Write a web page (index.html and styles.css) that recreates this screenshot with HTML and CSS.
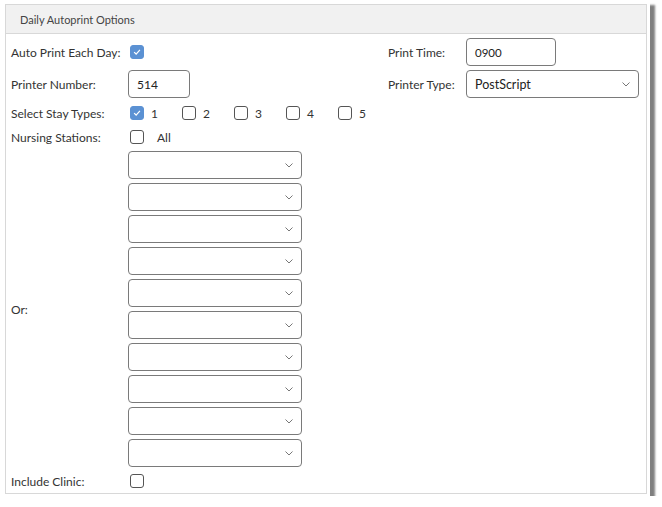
FILE: index.html
```html
<!DOCTYPE html>
<html>
<head>
<meta charset="utf-8">
<link rel="stylesheet" href="styles.css">
</head>
<body>
<div class="frame">
  <div class="panel">
    <div class="panel-head">Daily Autoprint Options</div>
    <div class="panel-body">
      <div class="row row-top">
        <div class="label">Auto Print Each Day:</div>
        <div class="field"><span class="cb checked"><svg viewBox="0 0 14 14"><path d="M3.6 7.2 L6 9.4 L10.4 4.6" /></svg></span></div>
        <div class="label">Print Time:</div>
        <div class="field"><div class="input time">0900</div></div>
      </div>
      <div class="row row-top">
        <div class="label">Printer Number:</div>
        <div class="field"><div class="input num">514</div></div>
        <div class="label">Printer Type:</div>
        <div class="field"><div class="select wide"><span class="val">PostScript</span><svg class="chev" viewBox="0 0 8 5"><path d="M0.5 0.5 L4 4 L7.5 0.5"/></svg></div></div>
      </div>
      <div class="row row-stay">
        <div class="label">Select Stay Types:</div>
        <div class="field checks">
          <label class="opt"><span class="cb checked"><svg viewBox="0 0 14 14"><path d="M3.6 7.2 L6 9.4 L10.4 4.6" /></svg></span><span>1</span></label>
          <label class="opt"><span class="cb"></span><span>2</span></label>
          <label class="opt"><span class="cb"></span><span>3</span></label>
          <label class="opt"><span class="cb"></span><span>4</span></label>
          <label class="opt"><span class="cb"></span><span>5</span></label>
        </div>
      </div>
      <div class="row row-nurse">
        <div class="label">Nursing Stations:</div>
        <div class="field"><label class="opt all"><span class="cb"></span><span>All</span></label></div>
      </div>
      <div class="row row-or">
        <div class="label">Or:</div>
        <div class="field selects">
          <div class="select"><svg class="chev" viewBox="0 0 8 5"><path d="M0.5 0.5 L4 4 L7.5 0.5"/></svg></div>
          <div class="select"><svg class="chev" viewBox="0 0 8 5"><path d="M0.5 0.5 L4 4 L7.5 0.5"/></svg></div>
          <div class="select"><svg class="chev" viewBox="0 0 8 5"><path d="M0.5 0.5 L4 4 L7.5 0.5"/></svg></div>
          <div class="select"><svg class="chev" viewBox="0 0 8 5"><path d="M0.5 0.5 L4 4 L7.5 0.5"/></svg></div>
          <div class="select"><svg class="chev" viewBox="0 0 8 5"><path d="M0.5 0.5 L4 4 L7.5 0.5"/></svg></div>
          <div class="select"><svg class="chev" viewBox="0 0 8 5"><path d="M0.5 0.5 L4 4 L7.5 0.5"/></svg></div>
          <div class="select"><svg class="chev" viewBox="0 0 8 5"><path d="M0.5 0.5 L4 4 L7.5 0.5"/></svg></div>
          <div class="select"><svg class="chev" viewBox="0 0 8 5"><path d="M0.5 0.5 L4 4 L7.5 0.5"/></svg></div>
          <div class="select"><svg class="chev" viewBox="0 0 8 5"><path d="M0.5 0.5 L4 4 L7.5 0.5"/></svg></div>
          <div class="select"><svg class="chev" viewBox="0 0 8 5"><path d="M0.5 0.5 L4 4 L7.5 0.5"/></svg></div>
        </div>
      </div>
      <div class="row row-clinic">
        <div class="label">Include Clinic:</div>
        <div class="field"><span class="cb"></span></div>
      </div>
    </div>
  </div>
</div>
</body>
</html>
```

FILE: styles.css
```css
html, body {
  margin: 0;
  padding: 0;
  background: #ffffff;
}
body {
  font-family: "Lato", "Open Sans", sans-serif;
  font-size: 12px;
  color: #333;
}
.frame {
  width: 650px;
  height: 496px;
  background: #fff;
  box-shadow: 5px 5px 2px rgba(0, 0, 0, 0.5);
  padding: 4px 0 0 5px;
  box-sizing: border-box;
}
.panel {
  width: 642px;
  height: 490px;
  border: 1px solid #d8d8d8;
  box-sizing: border-box;
  display: flex;
  flex-direction: column;
}
.panel-head {
  height: 29px;
  background: #f1f1f1;
  border-bottom: 1px solid #d8d8d8;
  box-sizing: border-box;
  padding-left: 14px;
  display: flex;
  align-items: center;
  font-size: 11px;
  color: #444;
}
.panel-body {
  padding: 4px 5px 0 5px;
}
.row {
  display: grid;
  grid-template-columns: 117px auto;
  align-items: center;
}
.row-top {
  grid-template-columns: 117px 260px 78px auto;
  height: 28px;
  margin-bottom: 4px;
}
.row-stay {
  height: 22px;
  margin-bottom: 2px;
}
.row-nurse {
  height: 22px;
  margin-bottom: 3px;
}
.row-or {
  margin-bottom: 4px;
}
.row-clinic {
  height: 20px;
}
.field {
  display: flex;
  align-items: center;
}
.cb {
  width: 14px;
  height: 14px;
  box-sizing: border-box;
  border: 1px solid #555;
  border-radius: 3px;
  background: #fff;
  margin-left: 2px;
  display: inline-flex;
  flex: none;
}
.cb.checked {
  background: #5b91d3;
  border-color: #5b91d3;
}
.cb svg {
  width: 12px;
  height: 12px;
  fill: none;
  stroke: #fff;
  stroke-width: 1.4;
}
.checks {
  display: flex;
  gap: 0;
}
.opt {
  display: flex;
  align-items: center;
  width: 52px;
}
.opt span:last-child {
  margin-left: 7px;
}
.opt.all span:last-child {
  margin-left: 13px;
}
.input, .select {
  height: 28px;
  box-sizing: border-box;
  border: 1px solid #7a7a7a;
  border-radius: 4px;
  background: #fff;
  display: flex;
  align-items: center;
  color: #222;
}
.input.num {
  width: 62px;
  padding-left: 8px;
}
.input.time {
  width: 90px;
  padding-left: 8px;
  font-size: 11.5px;
}
.select {
  width: 174px;
  justify-content: flex-end;
  padding-right: 8px;
}
.select.wide {
  width: 173px;
  justify-content: space-between;
  padding-left: 8px;
  font-size: 12.5px;
}
.chev {
  width: 8px;
  height: 5px;
  fill: none;
  stroke: #777;
  stroke-width: 1;
}
.selects {
  flex-direction: column;
  align-items: flex-start;
  gap: 4px;
}
```
